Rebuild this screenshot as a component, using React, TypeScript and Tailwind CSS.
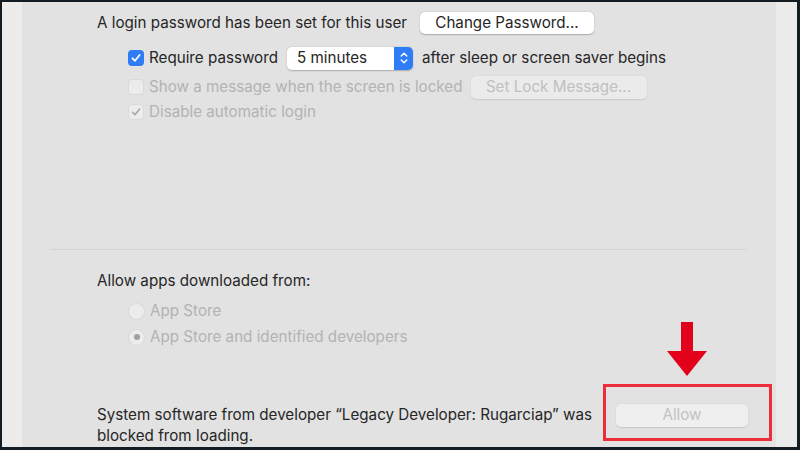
import React from "react";

const font = { fontFamily: "Inter, 'Noto Sans', sans-serif" };

function Check({ state }: { state: "on" | "off" | "dim" }) {
  if (state === "on") {
    return (
      <div className="w-[16px] h-[16px] rounded-[4px] bg-[#2e7cf6] flex items-center justify-center shrink-0">
        <svg width="12" height="12" viewBox="0 0 12 12">
          <path d="M2.5 6.3 L5 8.8 L9.6 3" fill="none" stroke="white" strokeWidth="1.8" strokeLinecap="round" strokeLinejoin="round" />
        </svg>
      </div>
    );
  }
  return (
    <div className="w-[16px] h-[16px] rounded-[4px] bg-[#ececec] border border-[#d9d9d9] flex items-center justify-center shrink-0">
      {state === "dim" && (
        <svg width="12" height="12" viewBox="0 0 12 12">
          <path d="M2.5 6.3 L5 8.8 L9.6 3" fill="none" stroke="#a8a8a8" strokeWidth="1.6" strokeLinecap="round" strokeLinejoin="round" />
        </svg>
      )}
    </div>
  );
}

function Radio({ on }: { on?: boolean }) {
  return (
    <div className="w-[17px] h-[17px] rounded-full bg-[#ececec] border border-[#d8d8d8] flex items-center justify-center shrink-0">
      {on && <div className="w-[6px] h-[6px] rounded-full bg-[#a0a0a0]" />}
    </div>
  );
}

export default function App() {
  return (
    <div className="w-[800px] h-[450px] bg-[#141c23] pt-[2px] pl-[2px] pr-[3px] pb-[3px] flex" style={font}>
      <div className="w-[20px] bg-[#ececec]" />
      <div className="flex-1 bg-[#e2e2e2] relative flex flex-col text-[15.2px] text-[#262626]">
        {/* Row 1 */}
        <div className="mt-[9px] h-[24px] pl-[75px] flex items-center">
          <span>A login password has been set for this user</span>
          <div className="ml-[13px] w-[174px] h-[22px] bg-white rounded-[5px] shadow-[0_0.5px_1.5px_rgba(0,0,0,0.25)] flex items-center justify-center">
            Change Password...
          </div>
        </div>
        {/* Row 2 */}
        <div className="mt-[11px] h-[24px] pl-[106px] flex items-center">
          <Check state="on" />
          <span className="ml-[5px]">Require password</span>
          <div className="ml-[9px] w-[126px] h-[23px] flex rounded-[5px] shadow-[0_0.5px_1.5px_rgba(0,0,0,0.25)]">
            <div className="flex-1 bg-white rounded-l-[5px] flex items-center pl-[10px]">5 minutes</div>
            <div className="w-[19px] bg-[#2e7cf6] rounded-r-[5px] flex items-center justify-center">
              <svg width="10" height="16" viewBox="0 0 10 16">
                <path d="M2.2 6 L5 3.2 L7.8 6 M2.2 10 L5 12.8 L7.8 10" fill="none" stroke="white" strokeWidth="1.4" strokeLinecap="round" strokeLinejoin="round" />
              </svg>
            </div>
          </div>
          <span className="ml-[9px]">after sleep or screen saver begins</span>
        </div>
        {/* Row 3 */}
        <div className="mt-[5px] h-[24px] pl-[106px] flex items-center text-[#b3b3b3]">
          <Check state="off" />
          <span className="ml-[5px]">Show a message when the screen is locked</span>
          <div className="ml-[8px] w-[176px] h-[23px] bg-[#ebebeb] rounded-[5px] shadow-[0_0.5px_1.5px_rgba(0,0,0,0.1)] flex items-center justify-center text-[#c0c0c0]">
            Set Lock Message...
          </div>
        </div>
        {/* Row 4 */}
        <div className="mt-[1px] h-[24px] pl-[106px] flex items-center text-[#b3b3b3]">
          <Check state="dim" />
          <span className="ml-[5px]">Disable automatic login</span>
        </div>
        {/* Separator */}
        <div className="mt-[125px] h-[1px] ml-[28px] mr-[29px] bg-[#d4d4d4]" />
        {/* Allow apps */}
        <div className="mt-[21px] h-[20px] pl-[75px] flex items-center">Allow apps downloaded from:</div>
        <div className="mt-[8px] h-[24px] pl-[106px] flex items-center text-[#b3b3b3]">
          <Radio />
          <span className="ml-[5px]">App Store</span>
        </div>
        <div className="mt-[2px] h-[24px] pl-[106px] flex items-center text-[#b3b3b3]">
          <Radio on />
          <span className="ml-[5px]">App Store and identified developers</span>
        </div>
        {/* Bottom */}
        <div className="mt-[55px] pl-[75px] flex items-start">
          <div className="w-[519px] leading-[21px] whitespace-nowrap">
            System software from developer “Legacy Developer: Rugarciap” was
            <br />
            blocked from loading.
          </div>
          <div className="w-[132px] h-[23px] bg-[#efefef] rounded-[5px] shadow-[0_0.5px_1.5px_rgba(0,0,0,0.12)] flex items-center justify-center text-[#c2c2c2]">
            Allow
          </div>
        </div>
        {/* Annotations */}
        <div className="absolute left-[581px] top-[382px] w-[169px] h-[57px] border-[3px] border-[#ee2d3a]" />
        <svg className="absolute left-[645px] top-[320px]" width="40" height="56" viewBox="0 0 40 56">
          <rect x="14" y="0" width="12" height="30" fill="#e3001b" />
          <polygon points="0,29 40,29 20,54" fill="#e3001b" />
        </svg>
      </div>
      <div className="w-[21px] bg-[#ececec]" />
    </div>
  );
}
